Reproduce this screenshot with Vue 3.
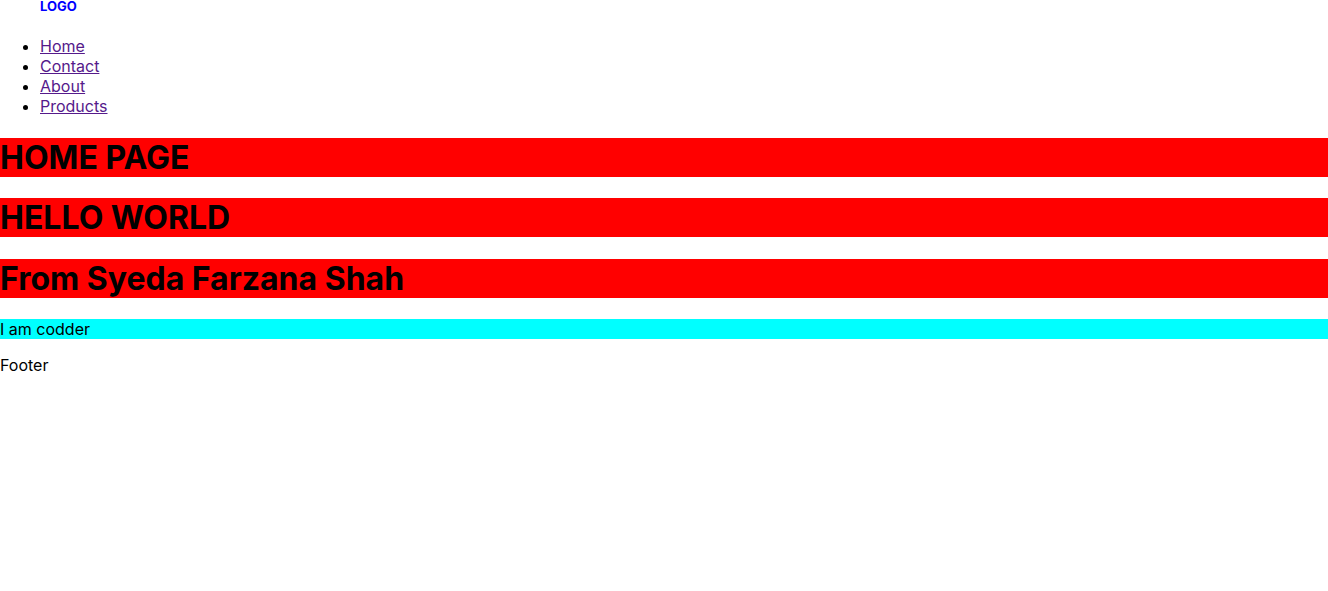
<script setup>
const links = ['Home', 'Contact', 'About', 'Products']
const headings = ['HOME PAGE', 'HELLO WORLD', 'From Syeda Farzana Shah']
</script>

<template>
  <div class="page">
    <nav>
      <h5 class="logo">LOGO</h5>
      <ul class="links">
        <li v-for="link in links" :key="link"><a href="#">{{ link }}</a></li>
      </ul>
    </nav>
    <main>
      <h1 v-for="heading in headings" :key="heading" class="heading">{{ heading }}</h1>
      <p class="intro">I am codder</p>
    </main>
    <footer>Footer</footer>
  </div>
</template>

<style scoped>
.page {
  font-family: Inter, sans-serif;
  font-size: 16px;
  line-height: 20px;
  color: #000;
}
.logo {
  margin: 0 0 23px;
  padding-left: 40px;
  font-size: 13px;
  line-height: 13px;
  font-weight: 700;
  color: #0000ff;
}
.links {
  margin: 0 0 22px;
  padding-left: 40px;
}
.links a {
  color: #551a8b;
}
.heading {
  margin: 0.67em 0;
  font-size: 32px;
  line-height: 39px;
  font-weight: 700;
  background: #ff0000;
}
.intro {
  margin: 0 0 16px;
  background: #00ffff;
}
</style>

<style>
body {
  margin: 0;
  background: #fff;
}
</style>
